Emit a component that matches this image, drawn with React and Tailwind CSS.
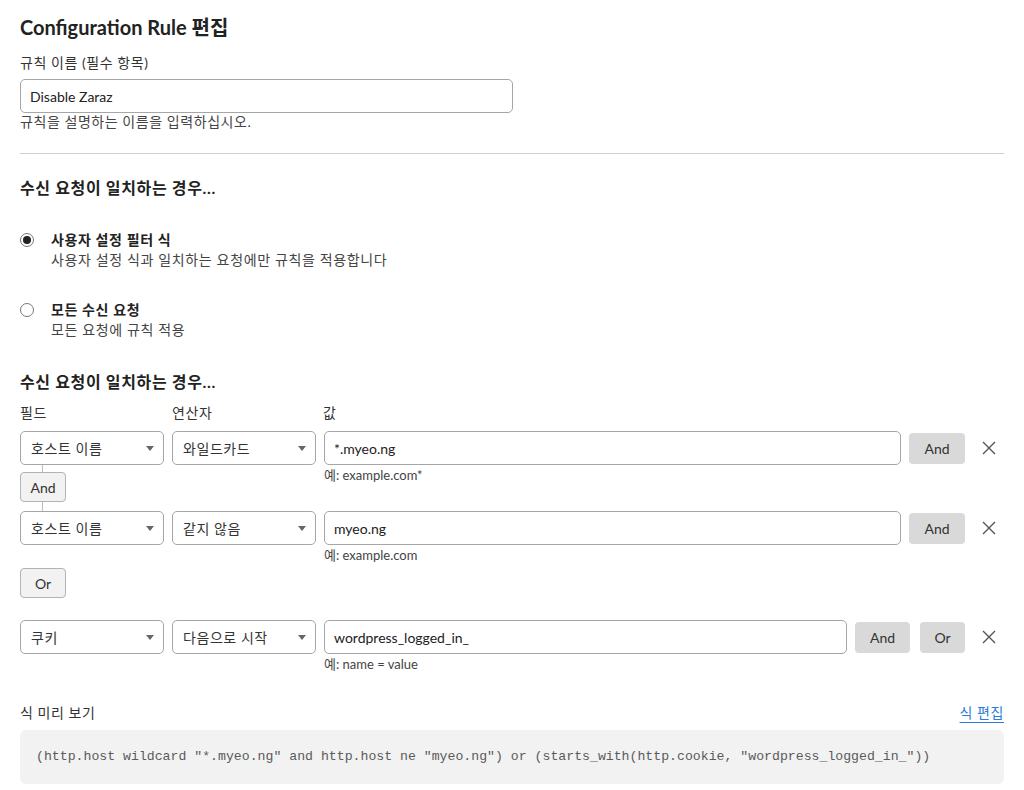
import React from "react";

const sans = "font-[family-name:Lato,'Noto_Sans_CJK_KR',sans-serif]";
const ko = "tracking-[0.04em]";

function Caret() {
  return (
    <svg width="8" height="5" viewBox="0 0 8 5" className="shrink-0">
      <path d="M0 0 L8 0 L4 5 Z" fill="#666" />
    </svg>
  );
}

function CloseIcon() {
  return (
    <svg width="14" height="14" viewBox="0 0 14 14">
      <path d="M1 1 L13 13 M13 1 L1 13" stroke="#555" strokeWidth="1.4" fill="none" />
    </svg>
  );
}

function Select({ value }) {
  return (
    <div className="flex h-[34px] w-[144px] items-center justify-between rounded-[5px] border border-[#a6a6a6] bg-white pl-[10px] pr-[9px] text-[14px] text-[#333]">
      <span className={ko}>{value}</span>
      <Caret />
    </div>
  );
}

function ValueInput({ value, hint }) {
  return (
    <div className="flex-1">
      <div className="flex h-[34px] items-center rounded-[5px] border border-[#a6a6a6] bg-white pl-[9px] text-[14px] text-[#222]">
        {value}
      </div>
      <div className="h-[18px] pt-[1px] text-[13px] leading-[18px] text-[#444]">{hint}</div>
    </div>
  );
}

function GrayButton({ label, width }) {
  return (
    <button className={`h-[31px] ${width} rounded-[4px] bg-[#d9d9d9] text-[14px] text-[#333]`}>
      {label}
    </button>
  );
}

function Actions({ children }) {
  return (
    <div className="flex">
      <div className="flex h-[34px] items-center gap-[10px]">{children}</div>
      <div className="flex h-[34px] w-[39px] items-center justify-end pr-[8px]">
        <CloseIcon />
      </div>
    </div>
  );
}

function Radio({ checked, title, desc }) {
  return (
    <div className="flex items-start">
      <div className="mt-[3px] flex h-[14px] w-[14px] items-center justify-center rounded-full border border-[#777] bg-white">
        {checked && <div className="h-[8px] w-[8px] rounded-full bg-[#222]" />}
      </div>
      <div className={`ml-[17px] ${ko}`}>
        <div className="text-[14px] font-bold leading-[20px] text-[#222]">{title}</div>
        <div className="text-[14px] leading-[20px] text-[#444]">{desc}</div>
      </div>
    </div>
  );
}

export default function App() {
  return (
    <div className={`${sans} bg-white px-5 pt-3 text-[#222]`}>
      <h1 className="text-[20px] font-bold leading-[30px] text-[#222]">Configuration Rule 편집</h1>

      <div className={`mt-[11px] text-[14px] leading-[20px] text-[#333] ${ko}`}>규칙 이름 (필수 항목)</div>
      <div className="mt-[6px] flex h-[34px] w-[493px] items-center rounded-[5px] border border-[#a6a6a6] pl-[9px] text-[14px]">
        Disable Zaraz
      </div>
      <div className={`text-[14px] leading-[18px] text-[#444] ${ko}`}>규칙을 설명하는 이름을 입력하십시오.</div>

      <div className="mt-[22px] border-t border-[#d0d0d0]" />

      <h2 className={`mt-[23px] text-[16px] font-bold leading-[22px] ${ko}`}>수신 요청이 일치하는 경우...</h2>

      <div className="mt-[31px]">
        <Radio checked title="사용자 설정 필터 식" desc="사용자 설정 식과 일치하는 요청에만 규칙을 적용합니다" />
      </div>
      <div className="mt-[30px]">
        <Radio title="모든 수신 요청" desc="모든 요청에 규칙 적용" />
      </div>

      <h2 className={`mt-[31px] text-[16px] font-bold leading-[22px] ${ko}`}>수신 요청이 일치하는 경우...</h2>

      <div className={`mt-[10px] flex text-[14px] leading-[20px] text-[#333] ${ko}`}>
        <div className="w-[152px]">필드</div>
        <div className="w-[151px]">연산자</div>
        <div>값</div>
      </div>

      {/* row 1 */}
      <div className="mt-[8px] flex items-start gap-[8px]">
        <div className="w-[144px]">
          <Select value="호스트 이름" />
          <div className="ml-[22px] h-[7px] w-px bg-[#bbb]" />
          <button className="h-[30px] w-[46px] rounded-[4px] border border-[#b3b3b3] bg-[#f2f2f2] text-[14px] text-[#333]">
            And
          </button>
          <div className="ml-[22px] h-[9px] w-px bg-[#bbb]" />
        </div>
        <Select value="와일드카드" />
        <ValueInput value="*.myeo.ng" hint="예: example.com*" />
        <Actions>
          <GrayButton label="And" width="w-[56px]" />
        </Actions>
      </div>

      {/* row 2 */}
      <div className="flex items-start gap-[8px]">
        <div className="w-[144px]">
          <Select value="호스트 이름" />
          <button className="mt-[23px] mb-[22px] h-[30px] w-[46px] rounded-[4px] border border-[#b3b3b3] bg-[#f2f2f2] text-[14px] text-[#333]">
            Or
          </button>
        </div>
        <Select value="같지 않음" />
        <ValueInput value="myeo.ng" hint="예: example.com" />
        <Actions>
          <GrayButton label="And" width="w-[56px]" />
        </Actions>
      </div>

      {/* row 3 */}
      <div className="flex items-start gap-[8px]">
        <Select value="쿠키" />
        <Select value="다음으로 시작" />
        <ValueInput value="wordpress_logged_in_" hint="예: name = value" />
        <Actions>
          <GrayButton label="And" width="w-[55px]" />
          <GrayButton label="Or" width="w-[45px]" />
        </Actions>
      </div>

      <div className={`mt-[31px] flex items-center justify-between text-[14px] leading-[20px] ${ko}`}>
        <span className="text-[#333]">식 미리 보기</span>
        <a className="text-[#2c7cd6] underline underline-offset-[4px]">식 편집</a>
      </div>
      <div className="mt-[7px] flex h-[54px] items-center rounded-[6px] bg-[#f2f2f2] px-[16px] font-[family-name:'Liberation_Mono',monospace] text-[13.2px] text-[#5a5a5a]">
        (http.host wildcard "*.myeo.ng" and http.host ne "myeo.ng") or (starts_with(http.cookie, "wordpress_logged_in_"))
      </div>
    </div>
  );
}
